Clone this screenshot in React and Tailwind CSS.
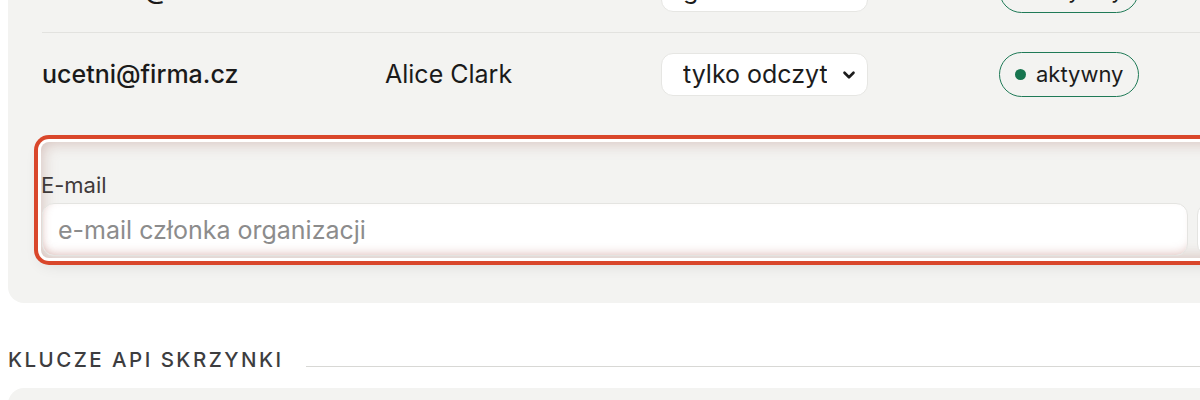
import { ChevronDown } from 'lucide-react'

const members = [
  { email: 'kadrowa@firma.cz', name: 'Jan Novák', role: 'gość', status: 'aktywny' },
  { email: 'ucetni@firma.cz', name: 'Alice Clark', role: 'tylko odczyt', status: 'aktywny' },
]

function RoleSelect({ value }) {
  return (
    <div className="relative w-[207px] h-[43px]">
      <select
        defaultValue={value}
        className="appearance-none w-full h-full bg-white border border-[#e6e6e3] rounded-xl pl-[21px] pr-10 text-[25px] text-[#1c1c1c] outline-none"
      >
        <option>{value}</option>
      </select>
      <ChevronDown className="absolute right-[10px] top-1/2 -translate-y-1/2 w-[18px] h-[18px] text-[#1c1c1c] pointer-events-none" strokeWidth={3.5} />
    </div>
  )
}

function StatusBadge({ label }) {
  return (
    <span className="inline-flex items-center gap-[10px] h-[45px] w-[140px] pl-[15px] border-[1.5px] border-[#1f7a57] rounded-full text-[22px] text-[#1c1c1c]">
      <span className="w-[11px] h-[11px] rounded-full bg-[#17754f]" />
      {label}
    </span>
  )
}

export default function App() {
  return (
    <div className="w-[1200px] h-[400px] overflow-hidden bg-white" style={{ fontFamily: 'Inter, "Noto Sans", sans-serif' }}>
      <div className="w-[1260px] pl-2">
        {/* Members card */}
        <div className="-mt-[51px] bg-[#f3f3f1] rounded-2xl pb-[45px]">
          <div className="pl-[34px]">
            {members.map((m, i) => (
              <div
                key={m.email}
                className={`grid items-center ${i ? 'h-[84px] border-t border-[#e2e2df]' : 'h-[83px]'}`}
                style={{ gridTemplateColumns: '343px 276px 338px 1fr' }}
              >
                <span className="text-[25px] font-medium text-[#1a1a1a]">{m.email}</span>
                <span className="text-[25px] text-[#1a1a1a]">{m.name}</span>
                <RoleSelect value={m.role} />
                <div><StatusBadge label={m.status} /></div>
              </div>
            ))}
          </div>

          {/* Invite form (focused) */}
          <div className="ml-[33px] mt-[26px] rounded-lg bg-[#f3f3f1] ring-4 ring-[#d9472b] ring-offset-[3px] ring-offset-white shadow-[inset_0_0_16px_rgba(150,80,70,0.35),0_6px_16px_rgba(0,0,0,0.12)] pt-[31px] pb-[2px]">
            <div className="flex gap-[9px]">
              <div className="w-[1147px] shrink-0">
                <div className="text-[22px] leading-6 text-[#3f3a3a]">E-mail</div>
                <input
                  placeholder="e-mail członka organizacji"
                  className="mt-[6px] w-[1146px] h-[53px] ml-[1px] bg-white border border-[#e4e4e1] rounded-xl pl-[15px] text-[25px] text-[#1a1a1a] placeholder:text-[#8c8c8c] outline-none shadow-[inset_0_-8px_10px_-6px_rgba(180,110,100,0.35),inset_6px_0_8px_-6px_rgba(180,110,100,0.3)]"
                />
              </div>
              <div className="w-[200px] shrink-0 h-[53px] mt-[30px] bg-white border border-[#e4e4e1] rounded-xl" />
            </div>
          </div>
        </div>

        {/* API keys section */}
        <div className="mt-[45px] flex items-end gap-[22px]">
          <h2 className="text-[20.5px] leading-6 font-medium tracking-[0.12em] text-[#3d3d3f] uppercase">Klucze API skrzynki</h2>
          <div className="flex-1 h-px bg-[#d8d8d5] mb-[5px]" />
        </div>
        <div className="mt-[16px] h-[80px] bg-[#f3f3f1] rounded-2xl" />
      </div>
    </div>
  )
}
